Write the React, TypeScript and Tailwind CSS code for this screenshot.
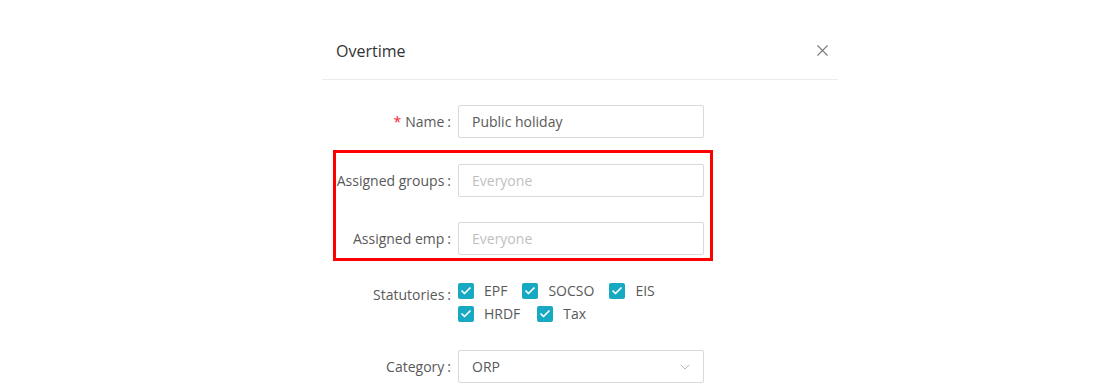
import { X, ChevronDown, Check } from "lucide-react";

const font = { fontFamily: '"Open Sans", "Noto Sans", sans-serif' };

function Label({ text, required, width }: { text: string; required?: boolean; width: string }) {
  return (
    <div className={`flex shrink-0 items-center justify-end pr-[7px] text-[14px] text-[#595959] ${width}`}>
      {required && <span className="mr-[4px] text-[#f5222d]">*</span>}
      <span>{text}</span>
      <span className="ml-[3px]">:</span>
    </div>
  );
}

function Input({ value, placeholder }: { value?: string; placeholder?: string }) {
  return (
    <div className="flex h-[33px] w-[246px] items-center rounded-[2px] border border-[#d9d9d9] bg-white px-[13px] text-[14px]">
      {value ? (
        <span className="text-[#595959]">{value}</span>
      ) : (
        <span className="text-[#bfbfbf]">{placeholder}</span>
      )}
    </div>
  );
}

function Box({ label }: { label: string }) {
  return (
    <div className="flex items-center">
      <span className="flex h-[16px] w-[16px] items-center justify-center rounded-[2px] bg-[#17a9c2]">
        <Check size={12} strokeWidth={3.5} color="white" />
      </span>
      <span className="ml-[10px] text-[14px] text-[#595959]">{label}</span>
    </div>
  );
}

export default function App() {
  return (
    <div className="h-[386px] w-full bg-white" style={font}>
      <div className="ml-[322px] w-[516px] pt-[22px]">
        <div className="flex h-[58px] items-center justify-between border-b border-[#ebebeb] pl-[14px] pr-[6px]">
          <span className="text-[16px] font-medium text-[#333]">Overtime</span>
          <X size={19} strokeWidth={1.4} color="#7a7a7a" />
        </div>

        <div className="mt-[25px] flex items-center">
          <Label text="Name" required width="w-[136px]" />
          <Input value="Public holiday" />
        </div>

        <div className="ml-[11px] mt-[12px] flex h-[111px] w-[380px] flex-col gap-[25px] border-[3px] border-[#ff0000] pt-[11px]">
          <div className="flex items-center">
            <Label text="Assigned groups" width="w-[122px]" />
            <Input placeholder="Everyone" />
          </div>
          <div className="flex items-center">
            <Label text="Assigned emp" width="w-[122px]" />
            <Input placeholder="Everyone" />
          </div>
        </div>

        <div className="mt-[19px] flex">
          <div className="pt-[4px]">
            <Label text="Statutories" width="w-[136px]" />
          </div>
          <div className="flex flex-col gap-[2px]">
            <div className="flex gap-[15px]">
              <Box label="EPF" />
              <Box label="SOCSO" />
              <Box label="EIS" />
            </div>
            <div className="flex gap-[17px]">
              <Box label="HRDF" />
              <Box label="Tax" />
            </div>
          </div>
        </div>

        <div className="mt-[26px] flex items-center">
          <Label text="Category" width="w-[136px]" />
          <div className="flex h-[33px] w-[246px] items-center justify-between rounded-[2px] border border-[#d9d9d9] bg-white pl-[13px] pr-[10px] text-[14px] text-[#595959]">
            <span>ORP</span>
            <ChevronDown size={16} strokeWidth={1.2} color="#a6a6a6" />
          </div>
        </div>
      </div>
    </div>
  );
}
